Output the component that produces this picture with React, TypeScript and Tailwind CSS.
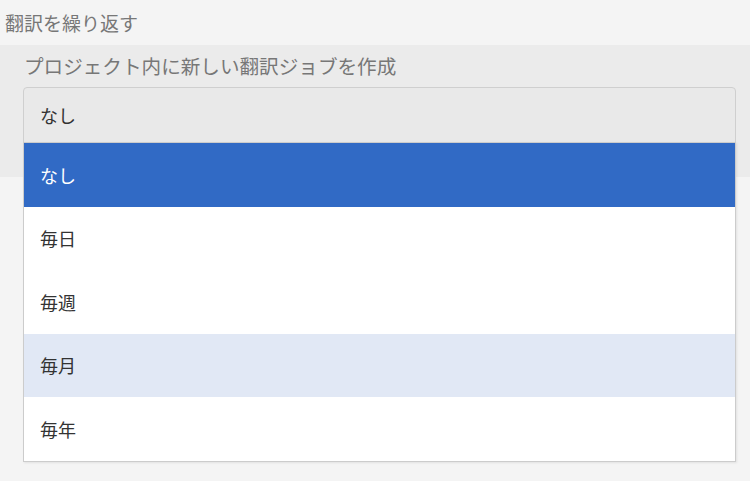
const options = ['なし', '毎日', '毎週', '毎月', '毎年'];

export default function App() {
  const selected = 0;
  const hovered = 3;

  return (
    <div
      className="w-[750px] h-[481px] bg-[#f4f4f4] overflow-hidden"
      style={{ fontFamily: '"Noto Sans CJK JP", "Noto Sans", sans-serif' }}
    >
      <div className="h-[45px] pl-[5px] pt-[10px] text-[19px] leading-[26px] text-[#777]">
        翻訳を繰り返す
      </div>

      <section className="relative h-[132px] bg-[#ebebeb] pl-[23px] pr-[14px] pt-[8px]">
        <div className="pl-[1px] text-[19.6px] leading-[26px] text-[#777]">
          プロジェクト内に新しい翻訳ジョブを作成
        </div>

        <div className="relative mt-[8px]">
          <div className="h-[56px] flex items-center px-[16px] bg-[#e9e9e9] border border-[#cfcfcf] rounded-t-[4px] text-[18px] text-[#333]">
            {options[selected]}
          </div>

          <ul className="absolute left-0 right-0 top-[55px] z-10 bg-white border border-[#cccccc] shadow-[1px_1px_2px_rgba(0,0,0,0.08)]">
            {options.map((opt, i) => (
              <li
                key={opt}
                className={
                  i === selected
                    ? 'h-[64px] flex items-center px-[16px] text-[18px] bg-[#316ac5] text-white'
                    : i === hovered
                      ? 'h-[63px] flex items-center px-[16px] text-[18px] bg-[#e1e8f5] text-[#333]'
                      : i === 2 || i === 4
                        ? 'h-[64px] flex items-center px-[16px] text-[18px] bg-white text-[#333]'
                        : 'h-[63px] flex items-center px-[16px] text-[18px] bg-white text-[#333]'
                }
              >
                {opt}
              </li>
            ))}
          </ul>
        </div>
      </section>
    </div>
  );
}
